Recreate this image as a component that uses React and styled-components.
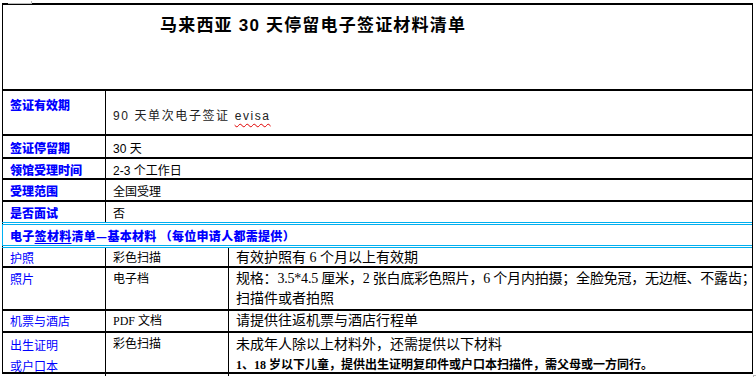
import styled, { createGlobalStyle } from 'styled-components';

const GlobalStyle = createGlobalStyle`
  html, body {
    margin: 0;
    padding: 0;
    background: #fff;
  }
  body {
    font-family: 'Liberation Sans', 'Noto Sans CJK SC', sans-serif;
    color: #000;
  }
`;

const LINK_BLUE = '#0000ff';
const RULE_BLUE = '#00b0f0';

const infoRows = [
  { label: '签证有效期', value: '90 天单次电子签证', extra: 'evisa', height: 45, tall: true },
  { label: '签证停留期', value: '30 天', height: 23 },
  { label: '领馆受理时间', value: '2-3 个工作日', height: 21 },
  { label: '受理范围', value: '全国受理', height: 22 },
  { label: '是否面试', value: '否', height: 20, last: true },
];

const materialRows = [
  {
    name: ['护照'],
    formText: '彩色扫描',
    detail: [{ text: '有效护照有 6 个月以上有效期' }],
    height: 20,
  },
  {
    name: ['照片'],
    formText: '电子档',
    detail: [
      { text: '规格：3.5*4.5 厘米，2 张白底彩色照片，6 个月内拍摄；全脸免冠，无边框、不露齿；', tight: true },
      { text: '扫描件或者拍照' },
    ],
    height: 43,
    lineHeight: 20,
  },
  {
    name: ['机票与酒店'],
    formText: 'PDF 文档',
    detail: [{ text: '请提供往返机票与酒店行程单' }],
    height: 22,
  },
  {
    name: ['出生证明', '或户口本'],
    formText: '彩色扫描',
    detail: [
      { text: '未成年人除以上材料外，还需提供以下材料' },
      { text: '1、18 岁以下儿童，提供出生证明复印件或户口本扫描件，需父母或一方同行。', bold: true },
    ],
    height: 41,
    lineHeight: 21,
  },
];

export default function App() {
  return (
    <>
      <GlobalStyle />
      <Page>
        <Sheet>
          <TopMark />
          <TitleRow>
            <Title>马来西亚 30 天停留电子签证材料清单</Title>
          </TitleRow>

          {infoRows.map((row) => (
            <InfoRow key={row.label} $height={row.height} $last={row.last}>
              <InfoLabel $tall={row.tall}>{row.label}</InfoLabel>
              <InfoValue $tall={row.tall}>
                {row.tall ? (
                  <SpacedText>
                    {row.value} <Misspelt>{row.extra}</Misspelt>
                  </SpacedText>
                ) : (
                  row.value
                )}
              </InfoValue>
            </InfoRow>
          ))}

          <SectionHeading>
            电子<Underlined>签材料</Underlined>清单—基本材料 （每位申请人都需提供）
          </SectionHeading>

          {materialRows.map((row) => (
            <MaterialRow key={row.name[0]} $height={row.height} $lineHeight={row.lineHeight}>
              <NameCell>
                {row.name.map((n) => (
                  <div key={n}>{n}</div>
                ))}
              </NameCell>
              <FormCell>{row.formText}</FormCell>
              <DetailCell>
                {row.detail.map((d) => (
                  <DetailLine key={d.text} $bold={d.bold} $tight={d.tight}>
                    {d.text}
                  </DetailLine>
                ))}
              </DetailCell>
            </MaterialRow>
          ))}
          <BottomMark />
        </Sheet>
      </Page>
    </>
  );
}

const Page = styled.div`
  width: 756px;
  height: 377px;
  overflow: hidden;
  padding: 3px 0 0 2px;
  box-sizing: border-box;
`;

const Sheet = styled.div`
  position: relative;
  width: 751px;
  border-left: 1px solid #000;
  border-right: 1px solid #000;
  border-top: 2px solid #000;
  box-sizing: border-box;
`;

const TopMark = styled.div`
  position: absolute;
  left: 5px;
  top: -4px;
  width: 23px;
  height: 2px;
  border-bottom: 1px solid #b8b8b8;
  border-right: 1px solid #b8b8b8;
`;

const BottomMark = styled.div`
  position: absolute;
  right: -5px;
  bottom: -5px;
  width: 3px;
  height: 3px;
  border-top: 1px solid #b8b8b8;
  border-left: 1px solid #b8b8b8;
`;

const TitleRow = styled.div`
  height: 86px;
  box-sizing: border-box;
  border-bottom: 2px solid #000;
  padding: 9px 0 0 157px;
`;

const Title = styled.h1`
  margin: 0;
  font-family: 'Liberation Sans', 'Noto Sans CJK SC', sans-serif;
  font-size: 17px;
  font-weight: 700;
  letter-spacing: 1.2px;
  line-height: 24px;
  color: #000;
`;

const InfoRow = styled.div`
  display: grid;
  grid-template-columns: 103px 1fr;
  height: ${({ $height }) => $height}px;
  box-sizing: border-box;
  border-bottom: ${({ $last }) => ($last ? 'none' : '2px solid #000')};
`;

const InfoLabel = styled.div`
  border-right: 1px solid #000;
  height: 100%;
  box-sizing: border-box;
  display: flex;
  align-items: ${({ $tall }) => ($tall ? 'flex-start' : 'center')};
  padding: ${({ $tall }) => ($tall ? '5px 0 0 7px' : '1px 0 0 7px')};
  font-family: 'Noto Sans CJK SC', sans-serif;
  font-size: 12px;
  font-weight: 900;
  color: ${LINK_BLUE};
`;

const InfoValue = styled.div`
  height: 100%;
  box-sizing: border-box;
  display: flex;
  align-items: center;
  padding: ${({ $tall }) => ($tall ? '4px 0 0 7px' : '1px 0 0 7px')};
  font-family: 'Liberation Sans', 'Noto Sans CJK SC', sans-serif;
  font-size: 12px;
  color: #000;
`;

const SpacedText = styled.span`
  letter-spacing: 1.6px;
  color: #222;
`;

const Misspelt = styled.span`
  text-decoration: underline wavy #e00000;
  text-decoration-thickness: 1px;
  text-underline-offset: 3px;
`;

const SectionHeading = styled.div`
  height: 26px;
  box-sizing: border-box;
  border-top: 3px double ${RULE_BLUE};
  border-bottom: 3px double ${RULE_BLUE};
  margin-left: -1px;
  border-left: 1px solid ${RULE_BLUE};
  display: flex;
  align-items: center;
  padding-left: 7px;
  font-family: 'Noto Sans CJK SC', sans-serif;
  font-size: 12px;
  font-weight: 900;
  letter-spacing: 0.3px;
  color: ${LINK_BLUE};
  white-space: nowrap;
`;

const Underlined = styled.span`
  text-decoration: underline;
  text-underline-offset: 2px;
`;

const MaterialRow = styled.div`
  display: grid;
  grid-template-columns: 103px 123px 1fr;
  height: ${({ $height }) => $height}px;
  box-sizing: border-box;
  border-bottom: 2px solid #000;
  line-height: ${({ $lineHeight }) => $lineHeight || 18}px;
  font-family: 'Liberation Serif', 'Noto Sans CJK SC', serif;
`;

const Cell = styled.div`
  box-sizing: border-box;
  padding: 1px 0 0 7px;
  white-space: nowrap;
`;

const NameCell = styled(Cell)`
  border-right: 1px solid #000;
  font-family: 'Noto Sans CJK SC', sans-serif;
  font-size: 12px;
  color: ${LINK_BLUE};
`;

const FormCell = styled(Cell)`
  border-right: 1px solid #000;
  font-size: 12px;
  color: #000;
`;

const DetailCell = styled(Cell)`
  font-size: 14px;
  color: #000;
`;

const DetailLine = styled.div`
  font-weight: ${({ $bold }) => ($bold ? 700 : 400)};
  font-size: ${({ $bold }) => ($bold ? '12px' : 'inherit')};
  letter-spacing: ${({ $tight }) => ($tight ? '-0.2px' : '0')};
`;
